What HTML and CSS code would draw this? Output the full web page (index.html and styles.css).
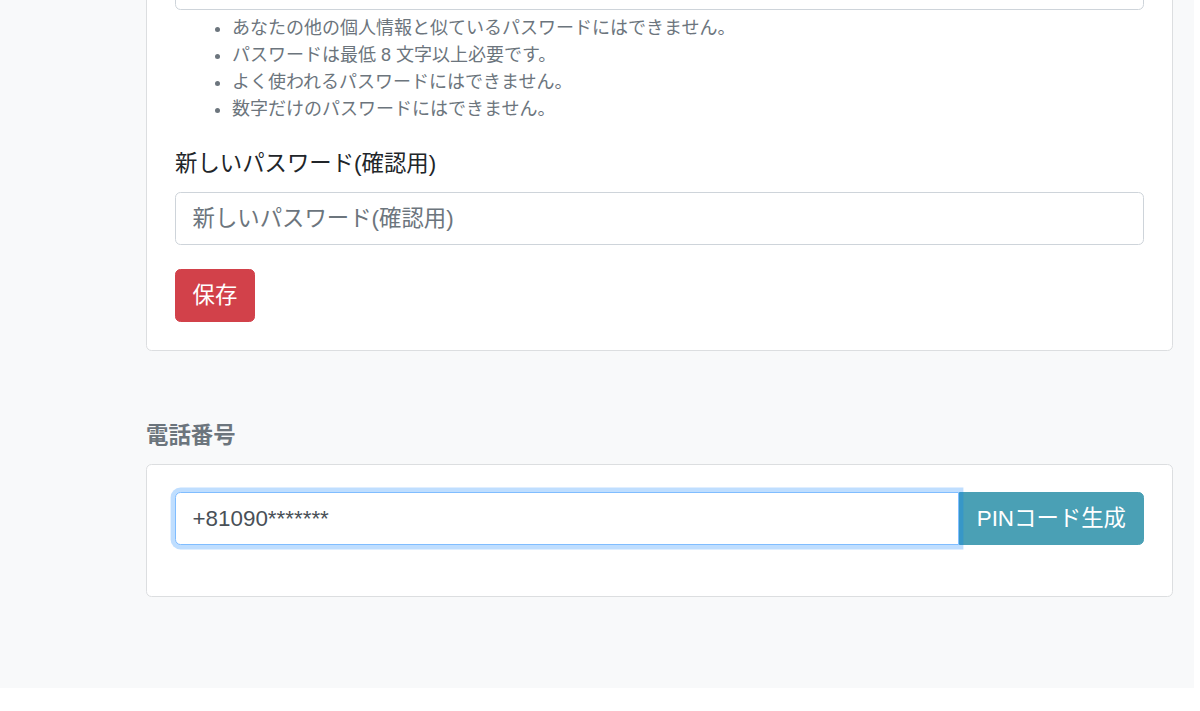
FILE: index.html
```html
<!DOCTYPE html>
<html lang="ja">
<head>
<meta charset="utf-8">
<title>アカウント設定</title>
<link rel="stylesheet" href="styles.css">
</head>
<body>
<div class="page">
  <div class="content">
    <section class="card card-password">
      <div class="card-body">
        <div class="form-group">
          <label class="form-label">新しいパスワード</label>
          <input class="form-control" type="password">
          <div class="form-text">
            <ul class="help-list">
              <li>あなたの他の個人情報と似ているパスワードにはできません。</li>
              <li>パスワードは最低 8 文字以上必要です。</li>
              <li>よく使われるパスワードにはできません。</li>
              <li>数字だけのパスワードにはできません。</li>
            </ul>
          </div>
        </div>
        <div class="form-group">
          <label class="form-label">新しいパスワード(確認用)</label>
          <input class="form-control" type="password" placeholder="新しいパスワード(確認用)">
        </div>
        <button class="btn btn-danger" type="button">保存</button>
      </div>
    </section>

    <h2 class="section-title">電話番号</h2>
    <section class="card card-phone">
      <div class="card-body">
        <div class="input-group">
          <input class="form-control is-focused" type="text" value="+81090*******">
          <button class="btn btn-info" type="button">PINコード生成</button>
        </div>
      </div>
    </section>
  </div>
</div>
</body>
</html>
```

FILE: styles.css
```css
html, body {
  margin: 0;
  padding: 0;
  background: #ffffff;
}

body {
  font-family: "Liberation Sans", "Noto Sans CJK JP", sans-serif;
  font-size: 22.4px;
  line-height: 33px;
  color: #212529;
}

.page {
  width: 1194px;
  height: 688px;
  background: #f8f9fa;
  overflow: hidden;
}

.content {
  padding: 0 21px 0 146px;
}

.card {
  background: #ffffff;
  border: 1px solid #dcdee0;
  border-radius: 5.5px;
}

.card-password {
  margin-top: -117.5px;
  margin-bottom: 68px;
}

.card-body {
  padding: 27.5px 28px 28px 28px;
}

.card-phone .card-body {
  padding-bottom: 29px;
}

.form-group {
  margin-bottom: 23.5px;
}

.form-label {
  display: block;
  margin-bottom: 12.5px;
  color: #212529;
}

.form-control {
  display: block;
  width: 100%;
  height: 53px;
  box-sizing: border-box;
  padding: 5px 16.5px;
  font-family: inherit;
  font-size: 22.4px;
  line-height: 33px;
  color: #495057;
  background: #ffffff;
  border: 1px solid #ced4da;
  border-radius: 5.5px;
  outline: none;
}

.form-control::placeholder {
  color: #6c757d;
  opacity: 1;
}

.form-text {
  margin-top: 5.5px;
  font-size: 18px;
  line-height: 27px;
  color: #6c757d;
}

.help-list {
  margin: 0;
  padding-left: 57px;
}

.btn {
  display: inline-block;
  height: 53px;
  box-sizing: border-box;
  padding: 0 16.5px;
  font-family: inherit;
  font-size: 22.4px;
  line-height: 33px;
  color: #ffffff;
  border: 1px solid transparent;
  border-radius: 5.5px;
  cursor: pointer;
}

.btn-danger {
  background: #d2414a;
  border-color: #d2414a;
}

.btn-info {
  background: #4aa0b5;
  border-color: #4aa0b5;
  white-space: nowrap;
  padding: 0 17px;
}

.section-title {
  margin: 0 0 12px 0;
  font-size: 22.4px;
  line-height: 33px;
  font-weight: 700;
  color: #6c757d;
}

.input-group {
  display: flex;
  align-items: stretch;
  margin-bottom: 22px;
}

.input-group .form-control {
  flex: 1 1 auto;
  width: auto;
  min-width: 0;
  border-top-right-radius: 0;
  border-bottom-right-radius: 0;
}

.input-group .btn {
  flex: 0 0 auto;
  border-top-left-radius: 0;
  border-bottom-left-radius: 0;
}

.form-control.is-focused {
  position: relative;
  z-index: 2;
  border-color: #80bdff;
  box-shadow: 0 0 0 4.4px rgba(0, 123, 255, 0.25);
}
```
